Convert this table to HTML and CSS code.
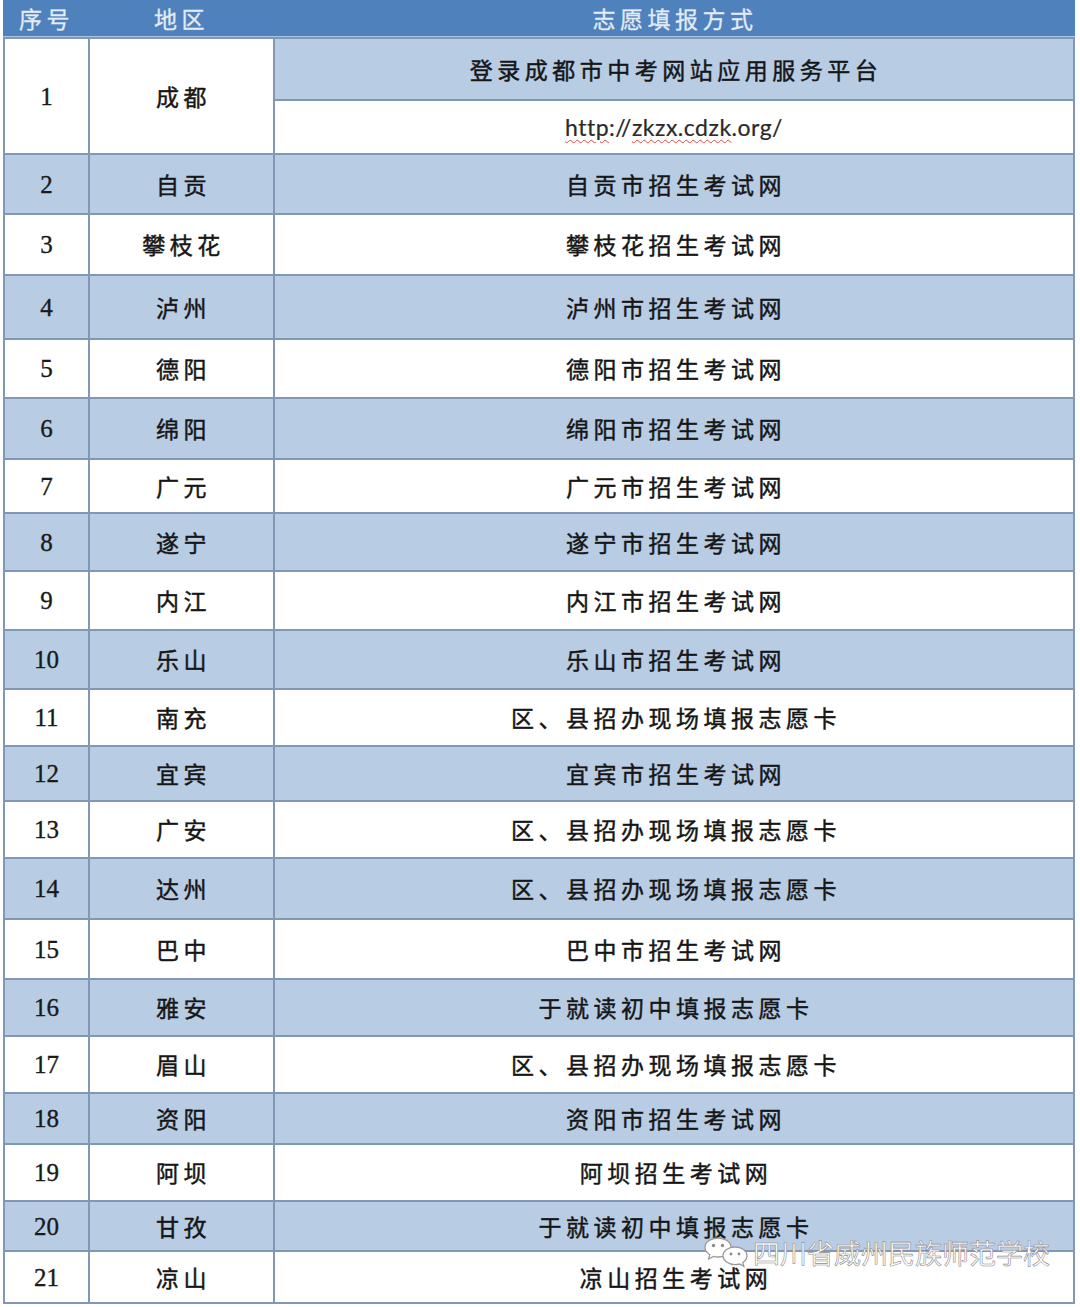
FILE: index.html
```html
<!DOCTYPE html>
<html lang="zh-CN">
<head>
<meta charset="utf-8">
<title>志愿填报方式</title>
<link rel="stylesheet" href="styles.css">
</head>
<body>
<div class="page">
  <div class="sheet">
    <div class="head">
      <div class="hc">序号</div>
      <div class="hc">地区</div>
      <div class="hc">志愿填报方式</div>
    </div>
    <div class="grid">
      <div class="c num span2">1</div>
      <div class="c area span2">成都</div>
      <div class="c way alt-cell">登录成都市中考网站应用服务平台</div>
      <div class="c url"><span class="sq">http</span>://<span class="sq">zkzx.cdzk</span>.org/</div>

      <div class="row alt"><div class="c num">2</div><div class="c area">自贡</div><div class="c way">自贡市招生考试网</div></div>
      <div class="row"><div class="c num">3</div><div class="c area">攀枝花</div><div class="c way">攀枝花招生考试网</div></div>
      <div class="row alt"><div class="c num">4</div><div class="c area">泸州</div><div class="c way">泸州市招生考试网</div></div>
      <div class="row"><div class="c num">5</div><div class="c area">德阳</div><div class="c way">德阳市招生考试网</div></div>
      <div class="row alt"><div class="c num">6</div><div class="c area">绵阳</div><div class="c way">绵阳市招生考试网</div></div>
      <div class="row"><div class="c num">7</div><div class="c area">广元</div><div class="c way">广元市招生考试网</div></div>
      <div class="row alt"><div class="c num">8</div><div class="c area">遂宁</div><div class="c way">遂宁市招生考试网</div></div>
      <div class="row"><div class="c num">9</div><div class="c area">内江</div><div class="c way">内江市招生考试网</div></div>
      <div class="row alt"><div class="c num">10</div><div class="c area">乐山</div><div class="c way">乐山市招生考试网</div></div>
      <div class="row"><div class="c num">11</div><div class="c area">南充</div><div class="c way">区、县招办现场填报志愿卡</div></div>
      <div class="row alt"><div class="c num">12</div><div class="c area">宜宾</div><div class="c way">宜宾市招生考试网</div></div>
      <div class="row"><div class="c num">13</div><div class="c area">广安</div><div class="c way">区、县招办现场填报志愿卡</div></div>
      <div class="row alt"><div class="c num">14</div><div class="c area">达州</div><div class="c way">区、县招办现场填报志愿卡</div></div>
      <div class="row"><div class="c num">15</div><div class="c area">巴中</div><div class="c way">巴中市招生考试网</div></div>
      <div class="row alt"><div class="c num">16</div><div class="c area">雅安</div><div class="c way">于就读初中填报志愿卡</div></div>
      <div class="row"><div class="c num">17</div><div class="c area">眉山</div><div class="c way">区、县招办现场填报志愿卡</div></div>
      <div class="row alt"><div class="c num">18</div><div class="c area">资阳</div><div class="c way">资阳市招生考试网</div></div>
      <div class="row"><div class="c num">19</div><div class="c area">阿坝</div><div class="c way">阿坝招生考试网</div></div>
      <div class="row alt"><div class="c num">20</div><div class="c area">甘孜</div><div class="c way">于就读初中填报志愿卡</div></div>
      <div class="row"><div class="c num">21</div><div class="c area">凉山</div><div class="c way">凉山招生考试网</div></div>
    </div>
  </div>

  <div class="watermark">
    <svg class="wx" width="46" height="31" viewBox="0 0 46 31" aria-hidden="true">
      <path d="M15 1 C22.5 1 28 5.3 28 10.5 C28 15.7 22.5 20 15 20 C13.4 20 11.9 19.8 10.5 19.4 L5.5 22 L6.8 17.6 C3.9 15.9 2 13.4 2 10.5 C2 5.3 7.5 1 15 1 Z" fill="#fff" stroke="#9a9a9a" stroke-width="1.3"/>
      <circle cx="10.5" cy="8.5" r="1.7" fill="#8a8a8a"/>
      <circle cx="19.5" cy="8.5" r="1.7" fill="#8a8a8a"/>
      <path d="M32 10 C38.6 10 44 13.9 44 18.8 C44 21.6 42.4 24 39.8 25.6 L40.9 29.4 L36.6 27 C35.1 27.4 33.6 27.6 32 27.6 C25.4 27.6 20 23.7 20 18.8 C20 13.9 25.4 10 32 10 Z" fill="#fff" stroke="#9a9a9a" stroke-width="1.3"/>
      <circle cx="28" cy="17" r="1.4" fill="#8a8a8a"/>
      <circle cx="36" cy="17" r="1.4" fill="#8a8a8a"/>
    </svg>
    <span class="wm-text">四川省威州民族师范学校</span>
  </div>
</div>
</body>
</html>
```

FILE: styles.css
```css
html, body {
  margin: 0;
  padding: 0;
  background: #ffffff;
}

.page {
  position: relative;
  width: 1080px;
  height: 1307px;
  overflow: hidden;
  font-family: "Noto Sans CJK SC", "Noto Sans", sans-serif;
  color: #161616;
}

.sheet {
  margin-left: 3px;
  width: 1072px;
}

.head {
  display: grid;
  grid-template-columns: 85px 185px 1fr;
  height: 36px;
  background: #4f81bd;
  border-bottom: 1px solid #a9c3e6;
}

.hc {
  display: flex;
  align-items: center;
  justify-content: center;
  font-size: 23px;
  letter-spacing: 4.5px;
  color: #e3ebf6;
  line-height: 1;
  padding-left: 2px;
  -webkit-text-stroke: 0.3px #e3ebf6;
}

.grid {
  display: grid;
  grid-template-columns: 83px 183px 1fr;
  grid-template-rows: 60px 52px 58px 59px 62px 57px 59px 52px 56px 57px 57px 55px 53px 55px 59px 58px 55px 55px 49px 55px 48px 50px;
  gap: 2px;
  padding: 2px;
  background: #8197b6;
}

.row {
  display: contents;
}

.c {
  display: flex;
  align-items: center;
  justify-content: center;
  background: #ffffff;
  line-height: 1;
  font-size: 23px;
  letter-spacing: 4.5px;
  padding-left: 4px;
  -webkit-text-stroke: 0.45px #161616;
}

.alt > .c,
.alt-cell {
  background: #b8cce4;
}

.span2 {
  grid-row: span 2;
}

.num {
  font-family: "Liberation Serif", "Times New Roman", serif;
  font-size: 25px;
  letter-spacing: 0;
  padding-left: 0;
  color: #1a1a1a;
  -webkit-text-stroke: 0.35px #1a1a1a;
}

.url {
  font-family: Lato, "Liberation Sans", sans-serif;
  font-size: 23px;
  letter-spacing: 0.5px;
  padding-left: 0;
  color: #2a2a2a;
  -webkit-text-stroke: 0.2px #2a2a2a;
}

.sq {
  text-decoration: underline wavy #e0483c;
  text-decoration-thickness: 1px;
  text-underline-offset: 3px;
}

.watermark {
  position: absolute;
  left: 703px;
  top: 1237px;
  display: flex;
  align-items: center;
  gap: 4px;
}

.wm-text {
  font-family: "Noto Sans CJK SC", sans-serif;
  font-size: 27px;
  line-height: 1;
  color: #ffffff;
  -webkit-text-stroke: 0.6px #8f8f8f;
  letter-spacing: 0;
}
```
